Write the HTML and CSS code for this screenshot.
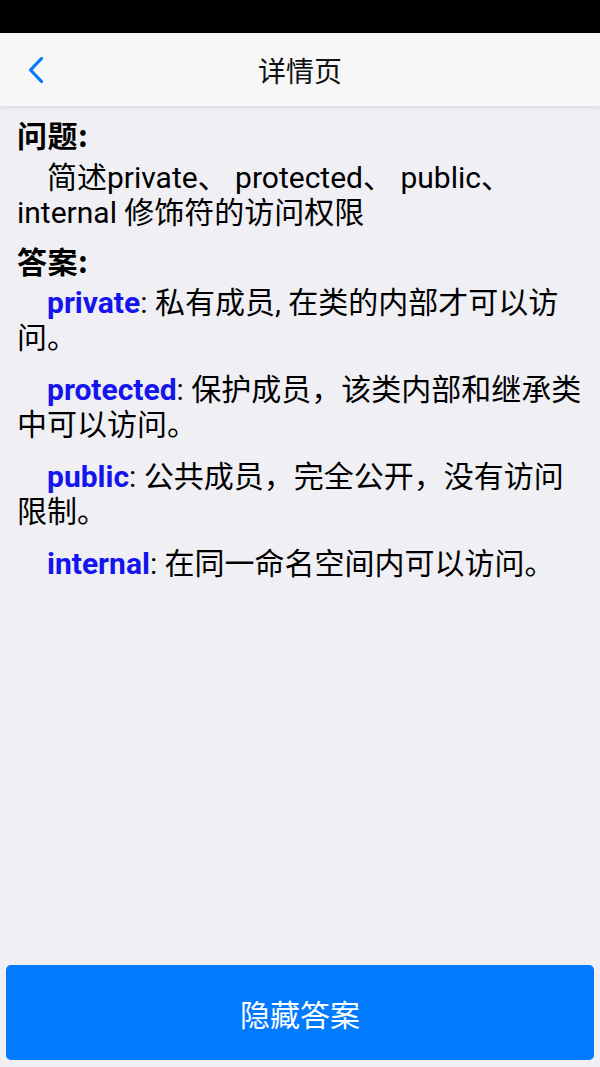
FILE: index.html
```html
<!DOCTYPE html>
<html lang="zh">
<head>
<meta charset="utf-8">
<title>详情页</title>
<link rel="stylesheet" href="styles.css">
</head>
<body>
<div class="screen">
  <div class="status-bar"></div>
  <header class="nav">
    <button class="back" aria-label="返回">
      <svg width="18" height="28" viewBox="0 0 18 28"><path d="M14.5 2.5 L3.5 14 L14.5 25.5" fill="none" stroke="#007aff" stroke-width="3.2" stroke-linecap="round" stroke-linejoin="round"/></svg>
    </button>
    <h1 class="nav-title">详情页</h1>
  </header>
  <main class="content">
    <h2 class="label label-q">问题:</h2>
    <p class="para question">简述private、 protected、 public、 internal 修饰符的访问权限</p>
    <h2 class="label label-a">答案:</h2>
    <p class="para answer"><b class="kw">private</b>: 私有成员, 在类的内部才可以访问。</p>
    <p class="para answer"><b class="kw">protected</b>: 保护成员，该类内部和继承类中可以访问。</p>
    <p class="para answer"><b class="kw">public</b>: 公共成员，完全公开，没有访问限制。</p>
    <p class="para answer"><b class="kw">internal</b>: 在同一命名空间内可以访问。</p>
  </main>
  <footer class="footer">
    <button class="hide-btn">隐藏答案</button>
  </footer>
</div>
</body>
</html>
```

FILE: styles.css
```css
* { box-sizing: border-box; }
html, body { margin: 0; padding: 0; }
body {
  font-family: Roboto, "Noto Sans CJK SC", "Noto Sans", sans-serif;
  background: #efeff4;
  color: #000;
}
.screen {
  display: flex;
  flex-direction: column;
  height: 1067px;
}
.status-bar {
  height: 33px;
  background: #000;
  flex: none;
}
.nav {
  position: relative;
  height: 73px;
  flex: none;
  background: #f7f7f7;
  display: flex;
  align-items: center;
  justify-content: center;
  box-shadow: 0 1px 5px rgba(0,0,0,0.12);
  z-index: 1;
}
.back {
  position: absolute;
  left: 27px;
  top: 23px;
  border: 0;
  background: none;
  padding: 0;
  width: 18px;
  height: 28px;
  display: flex;
  align-items: center;
  justify-content: center;
}
.nav-title {
  margin: 0;
  font-size: 28px;
  font-weight: 400;
  color: #111;
}
.content {
  flex: 1;
  padding: 11px 17px 0 17px;
}
.label {
  margin: 0;
  font-family: "Noto Sans CJK SC", sans-serif;
  font-size: 30px;
  font-weight: 700;
  line-height: 35px;
  letter-spacing: 0.5px;
}
.label-q { margin-bottom: 8px; }
.label-a { margin-top: 13px; margin-bottom: 7px; }
.para {
  margin: 0;
  font-size: 30px;
  line-height: 35px;
  text-indent: 30px;
  width: 566px;
}
.answer { margin-bottom: 17px; }
.kw {
  color: #1414ee;
  font-weight: 700;
}
.footer {
  flex: none;
  padding: 0 6px 7px 6px;
}
.hide-btn {
  display: block;
  width: 100%;
  height: 95px;
  border: 0;
  border-radius: 5px;
  background: #007aff;
  color: #fff;
  font-family: Roboto, "Noto Sans CJK SC", sans-serif;
  font-size: 30px;
}
```
